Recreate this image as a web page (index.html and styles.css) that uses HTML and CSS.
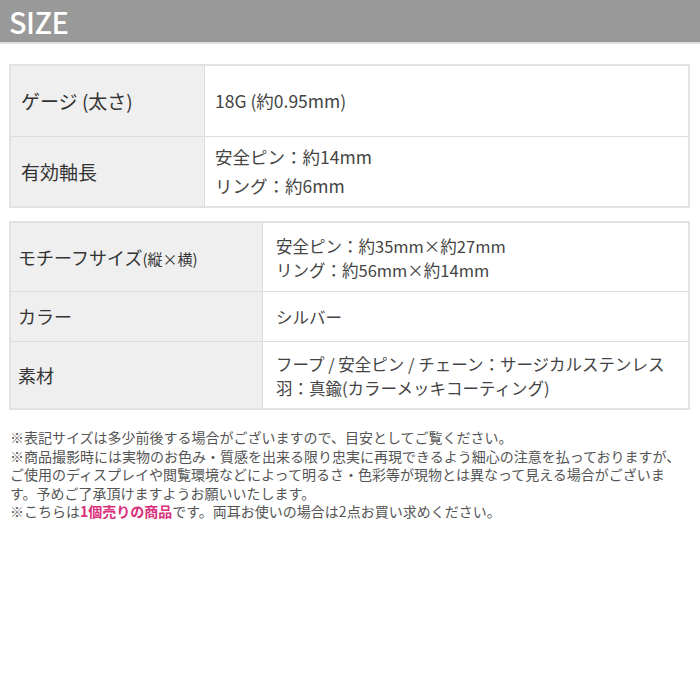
FILE: index.html
```html
<!DOCTYPE html>
<html lang="ja">
<head>
<meta charset="utf-8">
<link rel="stylesheet" href="styles.css">
</head>
<body>
<header class="bar"><h1 class="bar-title">SIZE</h1></header>
<main class="content">
  <table class="spec spec-main">
    <tr class="r71">
      <th class="lbl">ゲージ (太さ)</th>
      <td class="val">18G (約0.95mm)</td>
    </tr>
    <tr class="r71">
      <th class="lbl">有効軸長</th>
      <td class="val">安全ピン：約14mm<br>リング：約6mm</td>
    </tr>
  </table>
  <table class="spec spec-sub">
    <tr class="r69">
      <th class="lbl">モチーフサイズ<span class="small">(縦×横)</span></th>
      <td class="val">安全ピン：約35mm×約27mm<br>リング：約56mm×約14mm</td>
    </tr>
    <tr class="r50">
      <th class="lbl">カラー</th>
      <td class="val">シルバー</td>
    </tr>
    <tr class="r68">
      <th class="lbl">素材</th>
      <td class="val">フープ / 安全ピン / チェーン：サージカルステンレス<br>羽：真鍮(カラーメッキコーティング)</td>
    </tr>
  </table>
  <div class="notes">
    <p>※表記サイズは多少前後する場合がございますので、目安としてご覧ください。</p>
    <p>※商品撮影時には実物のお色み・質感を出来る限り忠実に再現できるよう細心の注意を払っておりますが、ご使用のディスプレイや閲覧環境などによって明るさ・色彩等が現物とは異なって見える場合がございます。予めご了承頂けますようお願いいたします。</p>
    <p>※こちらは<strong class="accent">1個売りの商品</strong>です。両耳お使いの場合は2点お買い求めください。</p>
  </div>
</main>
</body>
</html>
```

FILE: styles.css
```css
html, body {
  margin: 0;
  padding: 0;
  background: #fff;
}
body {
  font-family: "Noto Sans CJK JP", "Noto Sans", sans-serif;
  color: #333;
}
.bar {
  background: #999999;
  height: 42px;
  border-bottom: 2px solid #dedede;
  display: flex;
  align-items: center;
  padding-left: 9px;
  box-sizing: content-box;
}
.bar-title {
  margin: 0;
  color: #fff;
  font-size: 29px;
  font-weight: 500;
  line-height: 42px;
  letter-spacing: -0.6px;
}
.content {
  padding: 20px 10px 0 9px;
}
.spec {
  width: 681px;
  border-collapse: collapse;
  border: 2px solid #e2e2e2;
}
.spec th, .spec td {
  border: 1px solid #dcdcdc;
  vertical-align: middle;
  text-align: left;
  font-weight: 400;
}
.spec .lbl {
  background: #efefef;
  color: #333;
}
.spec .val {
  background: #fff;
  color: #444;
}
.spec-main .lbl {
  width: 183px;
  padding: 0 0 0 10px;
  font-size: 19px;
}
.spec-main .val {
  padding: 0 0 0 10px;
  font-size: 17.5px;
  line-height: 29px;
}
.spec-sub {
  margin-top: 13px;
}
.spec-sub .lbl {
  width: 244px;
  padding: 0 0 0 7px;
  font-size: 18px;
}
.spec-sub .val {
  padding: 2px 0 0 13px;
  font-size: 16.5px;
  line-height: 24px;
}
.small {
  font-size: 15px;
}
.r71 { height: 71px; }
.r69 { height: 69px; }
.r50 { height: 50px; }
.r68 { height: 68px; }
.notes {
  margin-top: 18px;
  padding-left: 1px;
  width: 680px;
  font-size: 14px;
  line-height: 18.5px;
  color: #555;
}
.notes p {
  margin: 0;
}
.accent {
  color: #d9307a;
  font-weight: 700;
}
```
